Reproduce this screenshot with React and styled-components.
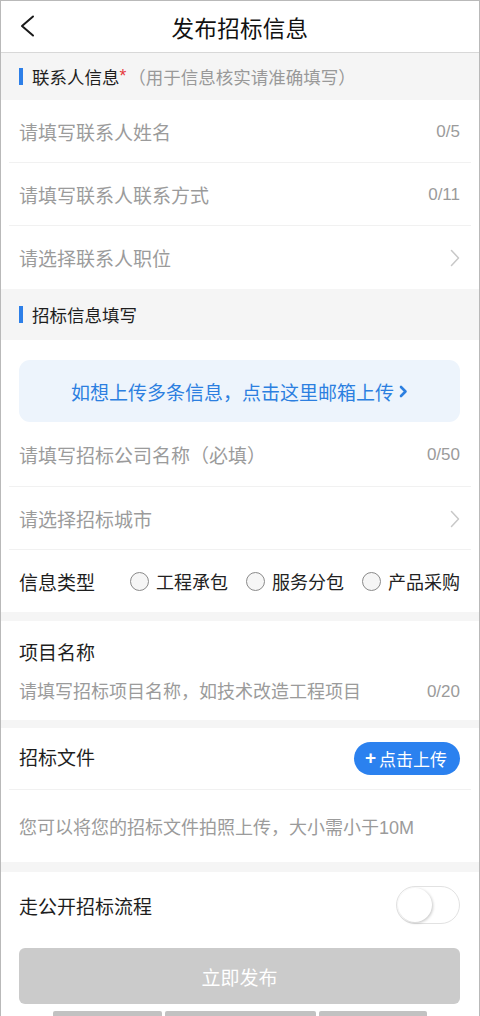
import React from 'react';
import styled, { createGlobalStyle } from 'styled-components';

const GlobalStyle = createGlobalStyle`
  html, body {
    margin: 0;
    padding: 0;
    background: #ffffff;
  }
  body {
    font-family: 'Liberation Sans', 'Noto Sans CJK SC', sans-serif;
    -webkit-font-smoothing: antialiased;
  }
  * { box-sizing: border-box; }
`;

const Page = styled.div`
  width: 480px;
  min-height: 1016px;
  border: 1px solid #b9b9b9;
  border-bottom: none;
  background: #fff;
  display: flex;
  flex-direction: column;
`;

const Header = styled.header`
  height: 52px;
  border-bottom: 1px solid #d8d8d8;
  display: flex;
  align-items: center;
  justify-content: center;
  position: relative;
`;

const BackButton = styled.button`
  position: absolute;
  left: 14px;
  top: 12px;
  width: 24px;
  height: 26px;
  border: none;
  background: none;
  padding: 0;
  display: flex;
  align-items: center;
  justify-content: center;
`;

const Title = styled.h1`
  margin: 0;
  font-size: 22.5px;
  font-weight: 400;
  color: #111;
  letter-spacing: 0.3px;
`;

const SectionHead = styled.div`
  height: ${p => p.h}px;
  background: #f5f5f5;
  display: flex;
  align-items: center;
  padding-left: 18px;
  font-size: 17.5px;
  color: #1e1e1e;
`;

const Bar = styled.span`
  width: 4px;
  height: 17px;
  background: #2d7fe8;
  margin-right: 9px;
`;

const Star = styled.span`
  color: #e5393c;
  margin-right: 2px;
`;

const Hint = styled.span`
  color: #999;
`;

const Row = styled.div`
  height: ${p => p.h || 63}px;
  display: flex;
  align-items: center;
  justify-content: space-between;
  padding: 0 19px ${p => p.lift || 0}px 18px;
  position: relative;
  ${p => p.divider && `
    &::after {
      content: '';
      position: absolute;
      left: 8px;
      right: 8px;
      bottom: 0;
      height: 1px;
      background: #f1f1f1;
    }
  `}
`;

const Placeholder = styled.span`
  font-size: ${p => p.size || 19}px;
  color: #9b9b9b;
`;

const Counter = styled.span`
  font-size: 17px;
  color: #9b9b9b;
`;

const Label = styled.span`
  font-size: 19px;
  color: #1e1e1e;
`;

const Banner = styled.div`
  margin: 20px 19px 0 18px;
  height: 62px;
  border-radius: 11px;
  background: #edf4fc;
  display: flex;
  align-items: center;
  justify-content: center;
  gap: 5px;
  color: #2c7fe0;
  font-size: 19px;
`;

const Options = styled.div`
  display: flex;
  gap: 18px;
`;

const Option = styled.label`
  display: flex;
  align-items: center;
  gap: 7px;
  font-size: 18px;
  color: #222;
`;

const Radio = styled.span`
  width: 19px;
  height: 19px;
  border-radius: 50%;
  border: 1.5px solid #8a8a8a;
  background: #f6f6f6;
`;

const Gap = styled.div`
  height: ${p => p.h}px;
  background: #f5f5f5;
`;

const Block = styled.div`
  padding: 20px 19px 15px 18px;
  display: flex;
  flex-direction: column;
  gap: 12px;
`;

const BlockLine = styled.div`
  display: flex;
  align-items: center;
  justify-content: space-between;
  line-height: 26px;
`;

const UploadButton = styled.button`
  height: 33px;
  padding: 0 13px 0 11px;
  border: none;
  border-radius: 17px;
  background: #2b81ef;
  color: #fff;
  font-family: inherit;
  font-size: 17px;
  display: flex;
  align-items: center;
  gap: 3px;
  margin-top: 5px;
`;

const Plus = styled.span`
  font-size: 19px;
  font-weight: 700;
  line-height: 1;
  margin-top: -2px;
`;

const Toggle = styled.span`
  width: 64px;
  height: 38px;
  border-radius: 19px;
  border: 1.5px solid #e2e2e2;
  background: #fff;
  display: flex;
  align-items: center;
  padding-left: 1px;
`;

const Knob = styled.span`
  width: 34px;
  height: 34px;
  border-radius: 50%;
  background: #fff;
  box-shadow: 1px 1px 3px rgba(0, 0, 0, 0.22);
`;

const SubmitButton = styled.button`
  margin: 10px 19px 0 18px;
  height: 56px;
  border: none;
  border-radius: 6px;
  background: #cbcbcb;
  color: #fff;
  font-family: inherit;
  font-size: 19px;
`;

const TabStub = styled.div`
  margin-top: 7px;
  padding-left: 52px;
  display: flex;
  gap: 3px;
  height: 5px;
`;

const TabPiece = styled.span`
  width: ${p => p.w}px;
  background: #c2c2c2;
  border-radius: 2px 2px 0 0;
`;

const Chevron = ({ color = '#c8c8c8' }) => (
  <svg width="10" height="18" viewBox="0 0 10 18" fill="none">
    <polyline points="1.5,1.5 8.5,9 1.5,16.5" stroke={color} strokeWidth="1.5" strokeLinecap="round" strokeLinejoin="round" />
  </svg>
);

const BannerArrow = () => (
  <svg width="9" height="13" viewBox="0 0 9 13" fill="none">
    <polyline points="2,2 6.5,6.5 2,11" stroke="#2c7fe0" strokeWidth="2.6" strokeLinecap="round" strokeLinejoin="round" />
  </svg>
);

const BackIcon = () => (
  <svg width="16" height="22" viewBox="0 0 16 22" fill="none">
    <polyline points="14,1.5 3,11 14,20.5" stroke="#1a1a1a" strokeWidth="2" strokeLinecap="round" strokeLinejoin="round" />
  </svg>
);

const types = ['工程承包', '服务分包', '产品采购'];

export default function App() {
  return (
    <>
      <GlobalStyle />
      <Page>
        <Header>
          <BackButton aria-label="返回"><BackIcon /></BackButton>
          <Title>发布招标信息</Title>
        </Header>

        <SectionHead h={47}>
          <Bar />
          联系人信息<Star>*</Star>
          <Hint>（用于信息核实请准确填写）</Hint>
        </SectionHead>
        <Row divider>
          <Placeholder>请填写联系人姓名</Placeholder>
          <Counter>0/5</Counter>
        </Row>
        <Row divider>
          <Placeholder>请填写联系人联系方式</Placeholder>
          <Counter>0/11</Counter>
        </Row>
        <Row>
          <Placeholder>请选择联系人职位</Placeholder>
          <Chevron />
        </Row>

        <SectionHead h={51}>
          <Bar />
          招标信息填写
        </SectionHead>
        <Banner>
          如想上传多条信息，点击这里邮箱上传
          <BannerArrow />
        </Banner>
        <Row h={65} divider>
          <Placeholder>请填写招标公司名称（必填）</Placeholder>
          <Counter>0/50</Counter>
        </Row>
        <Row divider>
          <Placeholder>请选择招标城市</Placeholder>
          <Chevron />
        </Row>
        <Row h={62}>
          <Label>信息类型</Label>
          <Options>
            {types.map(t => (
              <Option key={t}>
                <Radio />
                {t}
              </Option>
            ))}
          </Options>
        </Row>

        <Gap h={9} />
        <Block>
          <BlockLine><Label>项目名称</Label></BlockLine>
          <BlockLine>
            <Placeholder size={18}>请填写招标项目名称，如技术改造工程项目</Placeholder>
            <Counter>0/20</Counter>
          </BlockLine>
        </Block>

        <Gap h={8} />
        <Row h={62} lift={6} divider>
          <Label>招标文件</Label>
          <UploadButton><Plus>+</Plus>点击上传</UploadButton>
        </Row>
        <Row h={72}>
          <Placeholder size={18}>您可以将您的招标文件拍照上传，大小需小于10M</Placeholder>
        </Row>

        <Gap h={10} />
        <Row h={66}>
          <Label>走公开招标流程</Label>
          <Toggle><Knob /></Toggle>
        </Row>

        <SubmitButton>立即发布</SubmitButton>
        <TabStub>
          <TabPiece w={109} />
          <TabPiece w={151} />
          <TabPiece w={108} />
        </TabStub>
      </Page>
    </>
  );
}
